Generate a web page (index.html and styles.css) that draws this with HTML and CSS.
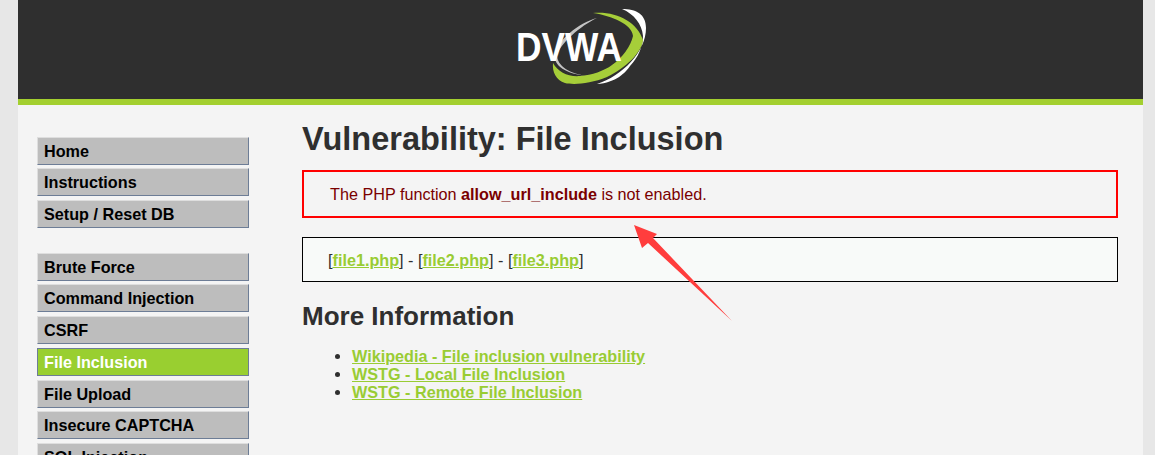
FILE: index.html
```html
<!DOCTYPE html>
<html lang="en">
<head>
    <meta charset="UTF-8">
    <title>Vulnerability: File Inclusion</title>
    <link rel="stylesheet" href="styles.css">
</head>
<body>
    <div class="container">
        <div class="header">
            <svg class="logo" width="140" height="86" viewBox="510 4 140 86" role="img" aria-label="DVWA">
                <path class="ring-white" d="M622 9 C636 9 646 14 646 28 C646 52 622 76 597 84 C616 83 626 72 630 66 C638 58 643 46 643 36 C642 24 634 14 622 9 Z"/>
                <path class="ring-grey" d="M597 18 C578 23 558 40 555 54 C553 66 566 74 588 76 C570 74 557 66 557 55 C560 44 580 26 597 18 Z"/>
                <path class="ring-green" d="M593 13 C617 11 637 22 643 40 C642 52 626 68 607 77 C590 84 573 85 565 83 C556 80 552 72 553 63 C558 72 568 77 580 76 C592 75 604 71 612 65 C622 58 631 46 633 36 C632 24 612 16 593 13 Z"/>
                <text class="logo-text" x="516" y="61" textLength="106" lengthAdjust="spacingAndGlyphs">DVWA</text>
            </svg>
        </div>
        <div class="main">
            <div class="sidebar">
                <ul class="menu">
                    <li>Home</li>
                    <li>Instructions</li>
                    <li>Setup / Reset DB</li>
                </ul>
                <ul class="menu">
                    <li>Brute Force</li>
                    <li>Command Injection</li>
                    <li>CSRF</li>
                    <li class="selected">File Inclusion</li>
                    <li>File Upload</li>
                    <li>Insecure CAPTCHA</li>
                    <li>SQL Injection</li>
                </ul>
            </div>
            <div class="content">
                <h1>Vulnerability: File Inclusion</h1>
                <div class="warning">The PHP function <strong>allow_url_include</strong> is not enabled.</div>
                <div class="files">[<a href="#">file1.php</a>] - [<a href="#">file2.php</a>] - [<a href="#">file3.php</a>]</div>
                <h2>More Information</h2>
                <ul class="links">
                    <li><a href="#">Wikipedia - File inclusion vulnerability</a></li>
                    <li><a href="#">WSTG - Local File Inclusion</a></li>
                    <li><a href="#">WSTG - Remote File Inclusion</a></li>
                </ul>
            </div>
        </div>
    </div>

    <svg class="arrow" width="1155" height="455" viewBox="0 0 1155 455" aria-hidden="true">
        <polygon points="634,225 657,234 653,238 732,321 648,243 642,248"/>
    </svg>
</body>
</html>
```

FILE: styles.css
```css
html, body {
    height: 100%;
    overflow: hidden;
}

body {
    margin: 0;
    padding: 0 12px 0 18px;
    background: #e7e7e7;
    font-family: "Liberation Sans", Arial, sans-serif;
    font-size: 16.2px;
    color: #2f2f2f;
}

.container {
    height: 100%;
    background: #f4f4f4;
}

.header {
    display: flex;
    justify-content: center;
    height: 99px;
    background: #2f2f2f;
    border-bottom: 6px solid #a3cf2f;
}

.logo {
    margin: 4px 0 0 -1px;
}

.logo-text {
    fill: #ffffff;
    font-size: 41px;
    font-weight: bold;
}

.ring-white {
    fill: #ffffff;
}

.ring-grey {
    fill: #c4c4c4;
}

.ring-green {
    fill: #a6ce39;
}

.main {
    display: flex;
    padding-top: 16px;
}

.sidebar {
    width: 212px;
    margin: 16px 0 0 19px;
    flex-shrink: 0;
}

.menu {
    list-style: none;
    margin: 0 0 21.4px;
    padding: 0;
}

.menu + .menu {
    margin-top: 25px;
}

.menu li {
    box-sizing: border-box;
    height: 28px;
    margin-bottom: 3.4px;
    padding: 0 0 0 6px;
    background: #bdbdbd;
    border: 1px solid #dedede;
    border-right-color: #6d7d96;
    border-bottom: 1px solid #6d7d96;
    color: #000000;
    font-weight: bold;
    line-height: 27px;
}

.menu + .menu li {
    margin-bottom: 3.7px;
}

.menu li.selected {
    background: #99cf30;
    border-color: #6d7d96;
    color: #ffffff;
}

.content {
    width: 816px;
    margin-left: 53px;
}

h1 {
    margin: 0;
    font-size: 32.5px;
    line-height: 37px;
    font-weight: bold;
}

.warning {
    box-sizing: border-box;
    height: 48px;
    margin-top: 12px;
    padding-left: 26px;
    border: 2px solid #ff0000;
    color: #7a0000;
    line-height: 44px;
}

.files {
    box-sizing: border-box;
    height: 45px;
    margin-top: 19px;
    padding-left: 25px;
    background: #f8faf9;
    border: 1px solid #000000;
    line-height: 45px;
}

a {
    color: #99cc33;
    font-weight: bold;
}

h2 {
    margin: 18px 0 0;
    font-size: 26px;
    line-height: 32px;
    font-weight: bold;
}

.links {
    margin: 15px 0 0;
    padding-left: 50px;
    line-height: 18px;
}

.arrow {
    position: absolute;
    top: 0;
    left: 0;
    fill: #ff3d3d;
    pointer-events: none;
}
```
